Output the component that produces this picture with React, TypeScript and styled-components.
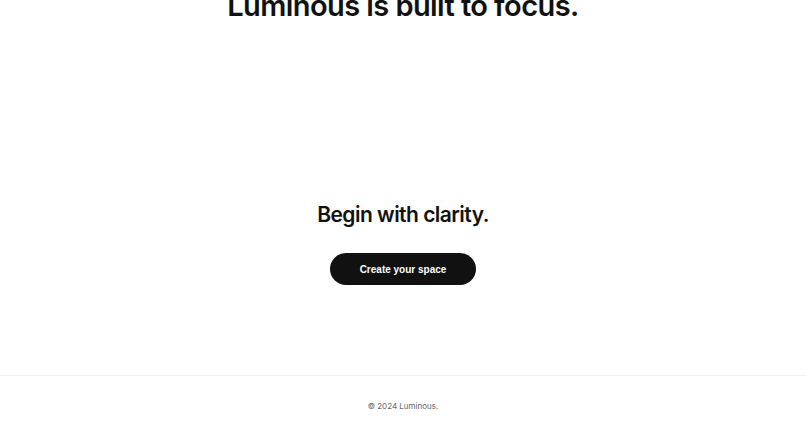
import React from 'react';
import styled, { createGlobalStyle } from 'styled-components';

const GlobalStyle = createGlobalStyle`
  html, body {
    margin: 0;
    padding: 0;
    background: #ffffff;
  }
  body {
    font-family: Inter, "Liberation Sans", sans-serif;
    color: #111111;
    -webkit-font-smoothing: antialiased;
  }
`;

export default function App() {
  return (
    <Page>
      <GlobalStyle />
      <Intro>
        <HeroTitle>Luminous is built to focus.</HeroTitle>
      </Intro>
      <CallToAction>
        <CtaTitle>Begin with clarity.</CtaTitle>
        <PrimaryButton type="button">Create your space</PrimaryButton>
      </CallToAction>
      <Footer>
        <FooterText>© 2024 Luminous.</FooterText>
      </Footer>
    </Page>
  );
}

const Page = styled.div`
  display: flex;
  flex-direction: column;
  min-height: 437px;
  overflow: hidden;
`;

const Intro = styled.section`
  display: flex;
  justify-content: center;
  margin-top: -12px;
`;

const HeroTitle = styled.h2`
  margin: 0;
  font-size: 29px;
  line-height: 36px;
  font-weight: 600;
  letter-spacing: -0.02em;
  color: #111;
`;

const CallToAction = styled.section`
  display: flex;
  flex-direction: column;
  align-items: center;
  padding: 177px 0 90px;
`;

const CtaTitle = styled.h3`
  margin: 0;
  font-size: 21px;
  line-height: 28px;
  font-weight: 600;
  letter-spacing: -0.025em;
  color: #111;
`;

const PrimaryButton = styled.button`
  margin-top: 24px;
  width: 146px;
  height: 32px;
  border: none;
  border-radius: 999px;
  background: #111111;
  color: #ffffff;
  font-family: "Liberation Sans", Arial, sans-serif;
  font-size: 10px;
  font-weight: 700;
  cursor: pointer;
`;

const Footer = styled.footer`
  border-top: 1px solid #f1f1f1;
  display: flex;
  justify-content: center;
  padding: 24px 0 30px;
`;

const FooterText = styled.p`
  margin: 0;
  font-size: 8px;
  line-height: 12px;
  color: #666666;
`;
